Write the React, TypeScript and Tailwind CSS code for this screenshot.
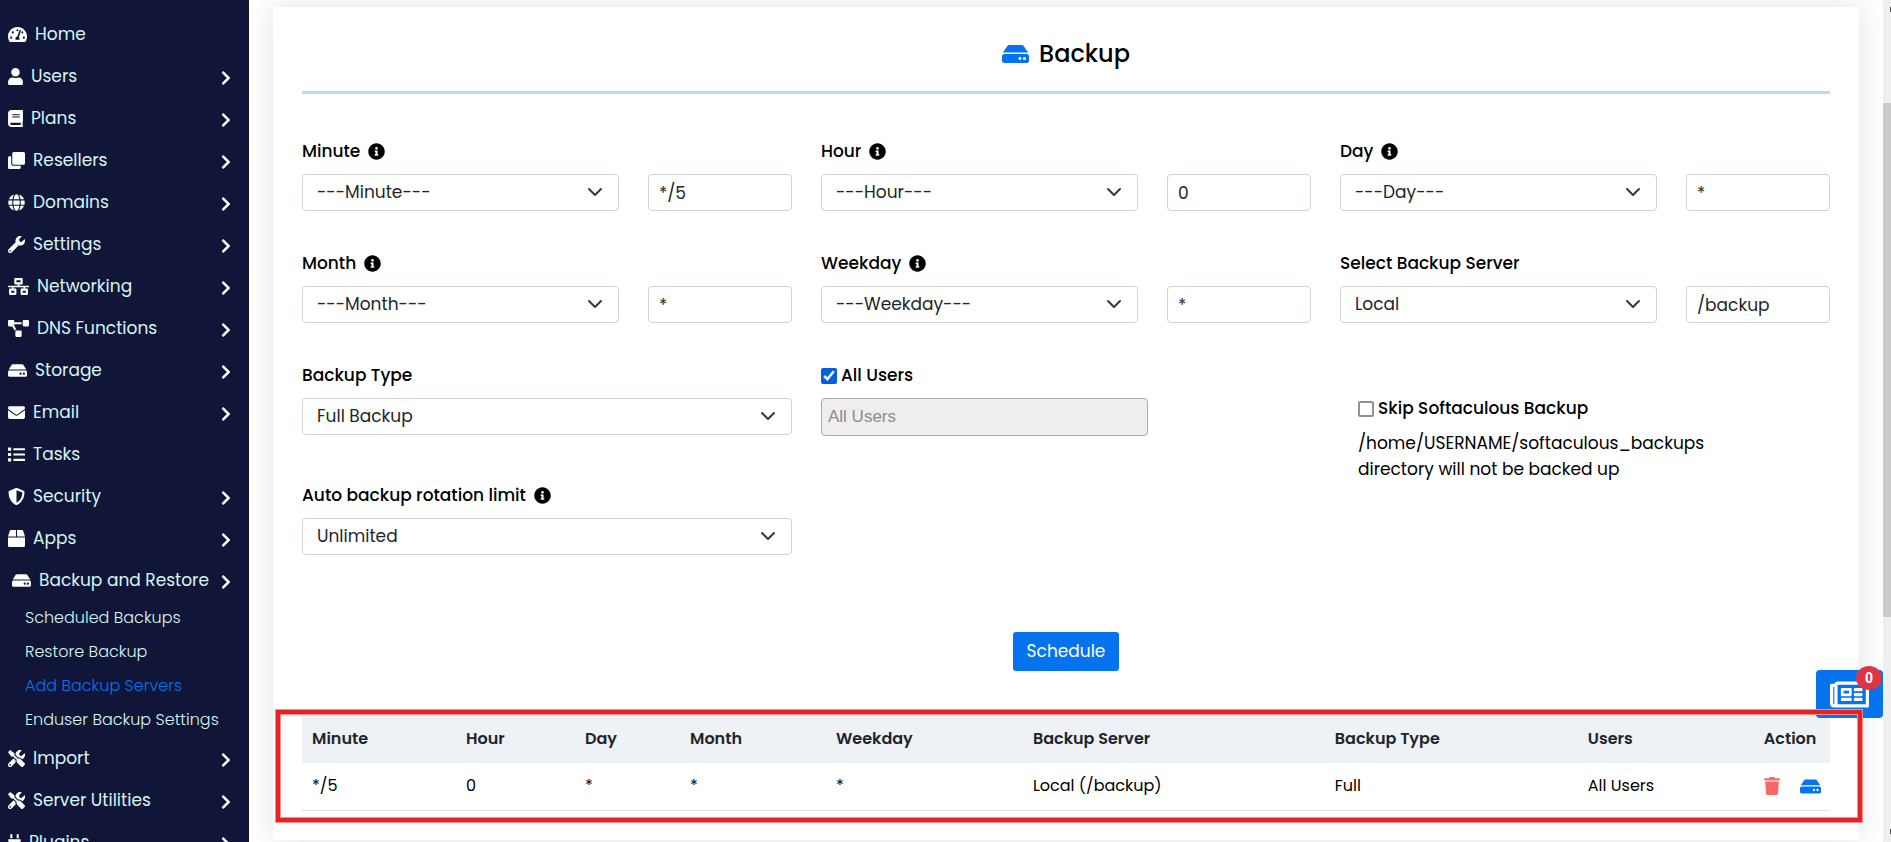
import type { ReactNode } from "react";
import type { IconType } from "react-icons";
import {
  FaBook,
  FaBox,
  FaChevronRight,
  FaClone,
  FaEnvelope,
  FaGlobe,
  FaHdd,
  FaInfoCircle,
  FaList,
  FaNetworkWired,
  FaPlug,
  FaProjectDiagram,
  FaRegNewspaper,
  FaShieldAlt,
  FaTachometerAlt,
  FaTools,
  FaTrash,
  FaUser,
  FaWrench,
} from "react-icons/fa";

type NavItem = { label: string; icon: IconType; size?: string; leaf?: boolean; children?: string[] };

// The glyphs differ in aspect ratio, so each one names its own width.
const NARROW = "w-[13px]";
const SLIM = "w-[15px]";
const SQUARE = "w-[17px]";
const WIDE = "w-[19px]";
const WIDEST = "w-[21px]";

const NAV: NavItem[] = [
  { label: "Home", icon: FaTachometerAlt, size: WIDE, leaf: true },
  { label: "Users", icon: FaUser, size: SLIM },
  { label: "Plans", icon: FaBook, size: SLIM },
  { label: "Resellers", icon: FaClone },
  { label: "Domains", icon: FaGlobe },
  { label: "Settings", icon: FaWrench },
  { label: "Networking", icon: FaNetworkWired, size: WIDEST },
  { label: "DNS Functions", icon: FaProjectDiagram, size: WIDEST },
  { label: "Storage", icon: FaHdd, size: WIDE },
  { label: "Email", icon: FaEnvelope },
  { label: "Tasks", icon: FaList, leaf: true },
  { label: "Security", icon: FaShieldAlt },
  { label: "Apps", icon: FaBox },
  {
    label: "Backup and Restore",
    icon: FaHdd,
    size: WIDE,
    children: ["Scheduled Backups", "Restore Backup", "Add Backup Servers", "Enduser Backup Settings"],
  },
  { label: "Import", icon: FaTools },
  { label: "Server Utilities", icon: FaTools },
  { label: "Plugins", icon: FaPlug, size: NARROW },
];

const ACTIVE = "Add Backup Servers";

function Sidebar() {
  return (
    <nav className="w-[249px] shrink-0 overflow-hidden bg-[#111638] pt-[13px] text-[#d6f5f3]">
      <ul>
        {NAV.map(({ label, icon: Icon, size = SQUARE, leaf, children }) => (
          <li key={label}>
            <a
              href="#"
              className={`flex h-[42px] items-center gap-2 pr-[18px] text-[17px] ${children ? "pl-3" : "pl-2"}`}
            >
              <Icon className={`h-[17px] shrink-0 text-white ${size}`} />
              <span className="mt-0.5 flex-1 whitespace-nowrap">{label}</span>
              {!leaf && <FaChevronRight className="mt-1 h-4 w-2.5 shrink-0 text-white" />}
            </a>
            {children && (
              <ul>
                {children.map((child) => (
                  <li key={child}>
                    <a
                      href="#"
                      className={`flex h-[34px] items-center pl-[25px] text-base font-light ${
                        child === ACTIVE ? "text-[#0572ee]" : ""
                      }`}
                    >
                      {child}
                    </a>
                  </li>
                ))}
              </ul>
            )}
          </li>
        ))}
      </ul>
    </nav>
  );
}

function FieldLabel({ htmlFor, info, children }: { htmlFor: string; info?: boolean; children: ReactNode }) {
  return (
    <div className="mb-[9px] flex h-[26px] items-center gap-2">
      <label htmlFor={htmlFor} className="font-medium">
        {children}
      </label>
      {info && <FaInfoCircle className="mb-0.5 size-[17px]" />}
    </div>
  );
}

function Select({ id, value }: { id: string; value: string }) {
  return (
    <div className="relative">
      <select
        id={id}
        defaultValue={value}
        className="block h-[37px] w-full appearance-none rounded border border-[#ced4da] bg-white pr-10 pl-3.5 text-[#212529]"
      >
        <option>{value}</option>
      </select>
      <svg
        viewBox="0 0 16 16"
        className="pointer-events-none absolute top-2.5 right-4 size-4 fill-none stroke-[#343a40] stroke-2"
        strokeLinecap="round"
        strokeLinejoin="round"
      >
        <path d="m2 5 6 6 6-6" />
      </svg>
    </div>
  );
}

function CronField({
  id,
  label,
  option,
  value,
  info = true,
}: {
  id: string;
  label: string;
  option: string;
  value: string;
  info?: boolean;
}) {
  return (
    <div>
      <FieldLabel htmlFor={id} info={info}>
        {label}
      </FieldLabel>
      <div className="grid grid-cols-3 gap-[29px]">
        <div className="col-span-2">
          <Select id={id} value={option} />
        </div>
        <input
          aria-label={`${label} value`}
          defaultValue={value}
          className="h-[37px] w-full min-w-0 rounded border border-[#ced4da] px-2.5 text-[#212529]"
        />
      </div>
    </div>
  );
}

const COLUMNS = [
  { title: "Minute", width: "w-[10.08%]", value: "*/5" },
  { title: "Hour", width: "w-[7.79%]", value: "0" },
  { title: "Day", width: "w-[6.87%]", value: "*" },
  { title: "Month", width: "w-[9.55%]", value: "*" },
  { title: "Weekday", width: "w-[12.89%]", value: "*" },
  { title: "Backup Server", width: "w-[19.76%]", value: "Local (/backup)" },
  { title: "Backup Type", width: "w-[16.56%]", value: "Full" },
  { title: "Users", width: "w-[11.52%]", value: "All Users" },
];

function ScheduleTable() {
  return (
    <div className="relative mt-11">
      <table className="w-full table-fixed text-left text-base">
        <thead className="bg-[#eef1f6] text-[#212529]">
          <tr className="h-12">
            {COLUMNS.map((c) => (
              <th key={c.title} className={`px-2.5 font-semibold ${c.width}`}>
                {c.title}
              </th>
            ))}
            <th className="pl-2.5 font-semibold">Action</th>
          </tr>
        </thead>
        <tbody>
          <tr className="h-[47px] border-b border-[#dee2e6]">
            {COLUMNS.map((c) => (
              <td key={c.title} className="px-2.5">
                {c.value}
              </td>
            ))}
            <td className="pl-2.5">
              <div className="flex items-center gap-5">
                <button aria-label="Delete" className="text-[#fb6666]">
                  <FaTrash className="h-[18px] w-4" />
                </button>
                <button aria-label="Back up now" className="text-[#0572ee]">
                  <FaHdd className="h-[19px] w-[21px]" />
                </button>
              </div>
            </td>
          </tr>
        </tbody>
      </table>
      <div className="pointer-events-none absolute -top-[5px] -right-[32px] -bottom-[11px] -left-[26px] z-20 border-4 border-[#e62222] shadow-[0_0_0_1px_#f58f8f,inset_0_0_0_1px_#f58f8f]" />
    </div>
  );
}

function ScrollTrack() {
  return (
    <div className="relative w-2 shrink-0 overflow-hidden bg-[#efefef]">
      <div className="mt-[103px] h-[514px] bg-[#cacaca]" />
      <div className="absolute top-[7px] right-0 h-[5px] w-px bg-[#505050]" />
      <div className="absolute right-0 bottom-[8px] h-[5px] w-px bg-[#505050]" />
    </div>
  );
}

export default function App() {
  return (
    <div className="flex h-screen overflow-hidden bg-white font-[Poppins,Inter,sans-serif] text-[17px] text-black">
      <Sidebar />
      <div className="relative min-w-0 flex-1 overflow-hidden px-6 pt-[7px]">
        <main className="bg-white px-[29px] pt-[27px] pb-[29px] shadow-[0_0_28px_rgba(0,0,0,0.12)]">
          <h1 className="flex h-[40px] items-center justify-center gap-2.5 text-2xl font-medium">
            <FaHdd className="h-6 w-[27px] text-[#0572ee]" />
            Backup
          </h1>
          <div className="mt-[17px] h-[3px] bg-[#bcdaf6]" />

          <form onSubmit={(e) => e.preventDefault()}>
            <div className="mt-[45px] grid grid-cols-3 gap-x-[29px] gap-y-10">
              <CronField id="minute" label="Minute" option="---Minute---" value="*/5" />
              <CronField id="hour" label="Hour" option="---Hour---" value="0" />
              <CronField id="day" label="Day" option="---Day---" value="*" />
              <CronField id="month" label="Month" option="---Month---" value="*" />
              <CronField id="weekday" label="Weekday" option="---Weekday---" value="*" />
              <CronField id="server" label="Select Backup Server" option="Local" value="/backup" info={false} />
              <div>
                <FieldLabel htmlFor="type">Backup Type</FieldLabel>
                <Select id="type" value="Full Backup" />
              </div>
              <div>
                <label className="mb-[9px] flex h-[26px] items-center gap-1 font-medium">
                  <input type="checkbox" defaultChecked className="size-4 accent-[#0060df]" />
                  All Users
                </label>
                <input
                  disabled
                  aria-label="Users"
                  placeholder="All Users"
                  className="block h-[38px] w-2/3 rounded border border-[#aaa] bg-[#eee] px-1.5 font-[Liberation_Sans,sans-serif] text-[17px] placeholder:text-[#8c8c8c]"
                />
              </div>
              <div className="h-20 pt-[33px] pl-[18px]">
                <label className="flex h-[26px] items-center gap-1 font-medium">
                  <input
                    type="checkbox"
                    className="size-4 appearance-none rounded-xs border-2 border-[#8f8f9d] bg-white"
                  />
                  Skip Softaculous Backup
                </label>
                <p className="mt-2 w-[360px] leading-[26px]">
                  /home/USERNAME/softaculous_backups directory will not be backed up
                </p>
              </div>
              <div>
                <FieldLabel htmlFor="rotation" info>
                  Auto backup rotation limit
                </FieldLabel>
                <Select id="rotation" value="Unlimited" />
              </div>
            </div>
            <div className="mt-[77px] flex justify-center">
              <button type="submit" className="h-[39px] rounded-[3px] bg-[#0572ee] px-3.5 text-[17px] text-white">
                Schedule
              </button>
            </div>
          </form>

          <ScheduleTable />
        </main>

        <button
          aria-label="News"
          className="absolute top-[670px] right-0 z-10 flex h-12 w-[67px] items-center justify-center rounded bg-[#0572ee] text-white"
        >
          <FaRegNewspaper className="h-[35px] w-[39px]" />
          <span className="absolute -top-1 right-[1px] flex h-6 w-[26px] items-center justify-center rounded-[50%] bg-[#dc3545] font-[Roboto,sans-serif] text-sm font-bold">
            0
          </span>
        </button>
      </div>
      <ScrollTrack />
    </div>
  );
}
